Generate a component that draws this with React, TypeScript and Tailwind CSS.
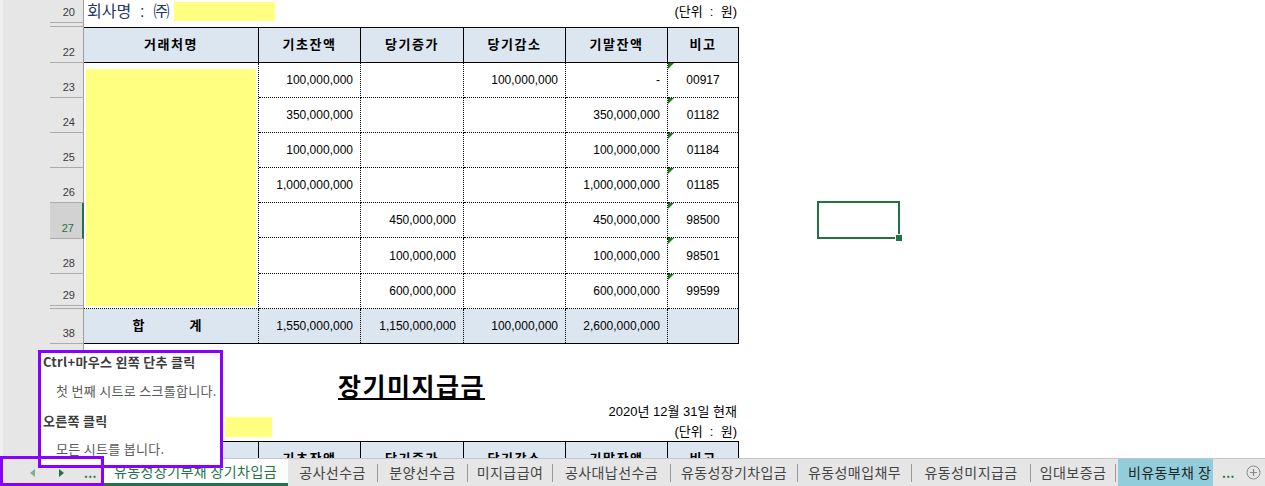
import React from "react";

const heads = ["거래처명", "기초잔액", "당기증가", "당기감소", "기말잔액", "비고"];

const rows = [
  { b: "100,000,000", c: "", d: "100,000,000", e: "-", f: "00917" },
  { b: "350,000,000", c: "", d: "", e: "350,000,000", f: "01182" },
  { b: "100,000,000", c: "", d: "", e: "100,000,000", f: "01184" },
  { b: "1,000,000,000", c: "", d: "", e: "1,000,000,000", f: "01185" },
  { b: "", c: "450,000,000", d: "", e: "450,000,000", f: "98500" },
  { b: "", c: "100,000,000", d: "", e: "100,000,000", f: "98501" },
  { b: "", c: "600,000,000", d: "", e: "600,000,000", f: "99599" },
];

const rowHeads = [
  { n: "20", h: "h-[23px]" },
  { n: "", h: "h-[4px]" },
  { n: "22", h: "h-[36px]" },
  { n: "23", h: "h-[35px]" },
  { n: "24", h: "h-[35px]" },
  { n: "25", h: "h-[35px]" },
  { n: "26", h: "h-[35px]" },
  { n: "27", h: "h-[36px]", sel: true },
  { n: "28", h: "h-[35px]" },
  { n: "29", h: "h-[32px]" },
  { n: "", h: "h-[3px]" },
  { n: "38", h: "h-[35px]" },
];

// sheet tabs after the active one, with their widths in the bar
const tabs = [
  { t: "공사선수금", w: "w-[89px]" },
  { t: "분양선수금", w: "w-[89px]" },
  { t: "미지급급여", w: "w-[84px]" },
  { t: "공사대납선수금", w: "w-[117px]" },
  { t: "유동성장기차입금", w: "w-[126px]" },
  { t: "유동성매입채무", w: "w-[113px]" },
  { t: "유동성미지급금", w: "w-[118px]" },
  { t: "임대보증금", w: "w-[84px]" },
];

const hd =
  "flex items-center justify-center bg-[#dce6f1] border-b border-black font-bold text-[13px] tracking-[1.5px] text-black";

function Num({ v }: { v: string }) {
  return (
    <div className="flex items-center justify-end pr-[7px] border-r border-b border-dotted border-black text-[12px] text-black">
      {v}
    </div>
  );
}

function Tri() {
  return (
    <svg className="absolute left-0 top-0" width="7" height="7" viewBox="0 0 7 7">
      <polygon points="0,0 6,0 0,6" fill="#167d16" />
    </svg>
  );
}

function RowHeaders() {
  return (
    <div className="flex w-[84px] shrink-0 bg-[#e6e6e6]">
      <div className="w-[3px] bg-[#efefef]" />
      <div className="w-[47px]" />
      <div className="w-[34px] flex flex-col font-['Liberation_Sans',sans-serif] text-[11px]">
        {rowHeads.map((r, i) => (
          <div
            key={i}
            className={`${r.h} shrink-0 flex items-end justify-end pr-[8px] pb-[2px] border-b border-[#ababab] ${
              r.sel ? "bg-[#d2d2d2] border-r-2 border-r-[#217346] text-[#217346] pr-[7px]" : "border-r border-r-[#9e9e9e] text-[#3b3b3b]"
            }`}
          >
            {r.n}
          </div>
        ))}
        <div className="flex-1 border-r border-[#9e9e9e]" />
      </div>
    </div>
  );
}

function MainTable() {
  return (
    <div className="grid grid-cols-[175px_102px_103px_102px_102px_70px] grid-rows-[35px_35px_35px_35px_35px_35px_36px_35px_34px] w-[655px] border-t border-r border-b border-black">
      {heads.map((h, i) => (
        <div key={h} className={`${hd} ${i < 5 ? "border-r" : ""}`}>
          {h}
        </div>
      ))}
      <div className="row-span-7 border-r border-b border-dotted border-black pt-[6px] px-[2px] pb-[2px]">
        <div className="h-full bg-[#ffff80]" />
      </div>
      {rows.map((r, i) => (
        <React.Fragment key={i}>
          <Num v={r.b} />
          <Num v={r.c} />
          <Num v={r.d} />
          <Num v={r.e} />
          <div className="relative flex items-center justify-center border-b border-dotted border-black text-[12px] text-black">
            <Tri />
            {r.f}
          </div>
        </React.Fragment>
      ))}
      <div className="flex items-center justify-center bg-[#dce6f1] border-r border-dotted border-black font-bold text-[13px] pr-[8px]">
        <span>합</span>
        <span className="ml-[45px]">계</span>
      </div>
      {["1,550,000,000", "1,150,000,000", "100,000,000", "2,600,000,000"].map((v) => (
        <div key={v} className="flex items-center justify-end pr-[7px] bg-[#dce6f1] border-r border-dotted border-black text-[12px]">
          {v}
        </div>
      ))}
      <div className="bg-[#dce6f1]" />
    </div>
  );
}

function SheetContent() {
  return (
    <div className="w-[655px]">
      <div className="h-[27px] pb-[4px] flex items-center justify-between">
        <div className="flex items-center pl-[3px]">
          <span className="text-[16px] text-[#1f3864] whitespace-pre">회사명  :  ㈜</span>
          <div className="ml-[5px] w-[101px] h-[19px] bg-[#ffff80]" />
        </div>
        <span className="pr-[2px] text-[13px] text-black whitespace-pre">(단위  :  원)</span>
      </div>
      <MainTable />
      <div className="h-[30px]" />
      <div className="h-[27px] flex justify-center">
        <span className="text-[25px] leading-[27px] tracking-[1.5px] font-bold underline underline-offset-[2px] text-black">
          장기미지급금
        </span>
      </div>
      <div className="h-[40px] flex justify-between">
        {/* company name row, mostly hidden under the tooltip */}
        <div className="flex items-end pb-[4px]">
          <div className="ml-[141px] w-[47px] h-[20px] bg-[#ffff80]" />
        </div>
        <div className="flex flex-col items-end pr-[2px] text-black">
          <span className="h-[22px] flex items-center text-[13px] whitespace-pre">2020년 12월 31일 현재</span>
          <span className="h-[18px] flex items-center text-[13px] whitespace-pre">(단위  :  원)</span>
        </div>
      </div>
      <div className="grid grid-cols-[175px_102px_103px_102px_102px_70px] h-[35px] w-[655px] border-t border-r border-black">
        {heads.map((h, i) => (
          <div key={h} className={`${hd} ${i < 5 ? "border-r" : ""}`}>
            {i === 0 ? "" : h}
          </div>
        ))}
      </div>
    </div>
  );
}

function TabBar() {
  return (
    <div className="h-[28px] flex items-stretch bg-[#e6e6e6] border-t border-[#c6c6c6] font-['Noto_Sans_CJK_KR',sans-serif] text-[14px] tracking-[0.4px] text-[#444] whitespace-nowrap">
      <div className="w-[103px] shrink-0 flex items-center">
        <svg className="ml-[30px]" width="5" height="8" viewBox="0 0 5 8">
          <polygon points="5,0 5,8 0,4" fill="#7fae8f" />
        </svg>
        <svg className="ml-[24px]" width="5" height="8" viewBox="0 0 5 8">
          <polygon points="0,0 0,8 5,4" fill="#217346" />
        </svg>
        <span className="ml-[20px] text-[#217346] font-bold text-[12px] leading-none">...</span>
      </div>
      <div className="w-[185px] shrink-0 bg-white text-[#217346] flex items-center justify-center border-b-[3px] border-[#217346]">
        유동성장기부채 장기차입금
      </div>
      {tabs.map((t, i) => (
        <React.Fragment key={t.t}>
          {i > 0 && <div className="self-center h-[18px] w-px bg-[#9a9a9a]" />}
          <div className={`${t.w} shrink-0 flex items-center justify-center`}>{t.t}</div>
        </React.Fragment>
      ))}
      <div className="self-center h-[18px] w-px bg-[#9a9a9a]" />
      <div className="ml-[2px] w-[95px] shrink-0 overflow-hidden bg-[#92cddc] text-[#222] flex items-center pl-[10px]">
        비유동부채 장
      </div>
      <span className="ml-[9px] w-[14px] flex items-center text-[#217346] font-bold text-[12px]">...</span>
      <div className="ml-[10px] flex items-center">
        <svg width="15" height="15" viewBox="0 0 15 15">
          <circle cx="7.5" cy="7.5" r="6.5" fill="none" stroke="#8a8a8a" strokeWidth="1" />
          <path d="M7.5 4v7M4 7.5h7" stroke="#8a8a8a" strokeWidth="1.2" />
        </svg>
      </div>
    </div>
  );
}

export default function App() {
  return (
    <div className="relative w-[1265px] h-[486px] overflow-hidden bg-white font-['Liberation_Sans','Noto_Sans_CJK_KR',sans-serif]">
      <div className="flex h-[458px] overflow-hidden">
        <RowHeaders />
        <SheetContent />
      </div>
      <TabBar />

      {/* selected cell */}
      <div className="absolute left-[817px] top-[201px] w-[83px] h-[38px] border-2 border-[#217346]">
        <div className="absolute left-[76px] top-[31px] w-[7px] h-[7px] bg-[#217346] border-l border-t border-white" />
      </div>

      {/* tooltip */}
      <div className="absolute left-[38px] top-[350px] w-[185px] h-[118px] border-[3px] border-[#8800ff] bg-white font-['Noto_Sans_CJK_KR',sans-serif] text-[13px] tracking-[0.3px] leading-[18px]">
        <div className="pl-[2px] font-semibold text-[#3c3c3c] whitespace-nowrap">Ctrl+마우스 왼쪽 단추 클릭</div>
        <div className="mt-[11px] pl-[15px] text-[#5a5a5a] whitespace-nowrap">첫 번째 시트로 스크롤합니다.</div>
        <div className="mt-[12px] pl-[2px] font-semibold text-[#3c3c3c]">오른쪽 클릭</div>
        <div className="mt-[10px] pl-[15px] text-[#5a5a5a]">모든 시트를 봅니다.</div>
      </div>
      <div className="absolute left-0 top-[456px] w-[104px] h-[30px] border-[3px] border-[#8800ff]" />
    </div>
  );
}
